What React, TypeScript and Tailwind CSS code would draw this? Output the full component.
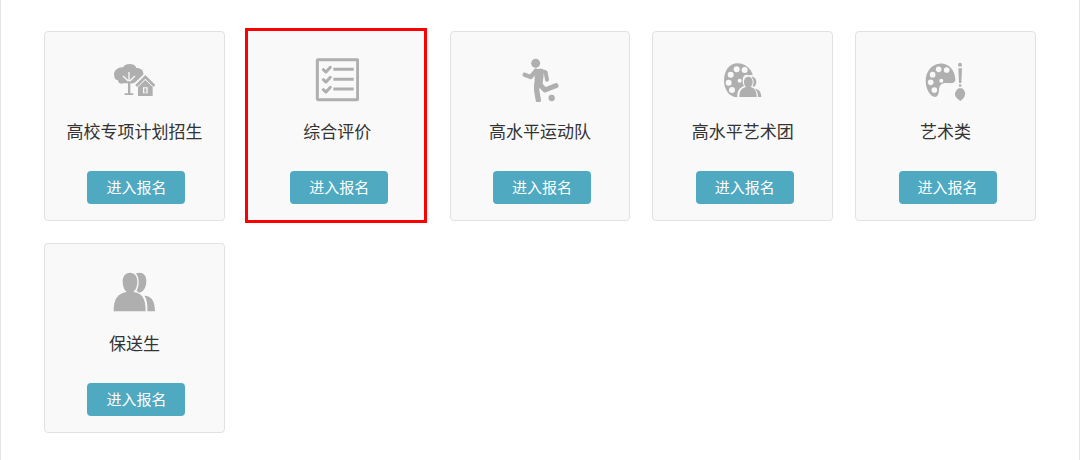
import React from 'react';
import { clsx } from 'clsx';

interface IconProps {
  viewBox: string;
  children: React.ReactNode;
}

const Icon: React.FC<IconProps> = ({ viewBox, children }) => (
  <svg viewBox={viewBox} className="h-11 w-11 text-[#afafaf]" fill="currentColor" aria-hidden="true">
    {children}
  </svg>
);

const TreeHouseIcon = () => (
  <Icon viewBox="25 24 132 132">
    <path d="M42 56 C47 51 53 53 58 52 C62 44 69 42 78 42 C89 42 96 46 98 54 C109 53 119 60 119 70 L119 74 L98 94 C93 99 87 102 81 100 L58 100 C50 103 43 99 43 91 C35 89 31 84 32 77 C29 70 33 60 42 56 Z" />
    <g fill="none" stroke="#f9f9f9" strokeWidth="4">
      <path d="M76 66 V102 M58 78 L76 95 M94 78 L76 95" />
    </g>
    <path d="M73 94 H80 V130 H89 V135 H63 V130 H73 Z" />
    <path d="M125 74 L157 107 L149 113 V141 H99 V113 L91 107 Z" fill="#f9f9f9" />
    <path d="M125 75 L155 105 L150 111 L125 86 L100 111 L95 105 Z" />
    <path
      fillRule="evenodd"
      d="M125 90 L147 111 V138 H103 V111 Z M118 112 V130 H132 V112 Z"
    />
    <path d="M122 115 H128 V128 H122 Z" />
  </Icon>
);

const ChecklistIcon = () => (
  <Icon viewBox="27 24 132 132">
    <g fill="none" stroke="currentColor">
      <rect x="34" y="29" width="121" height="120" rx="2" strokeWidth="9" />
      <path d="M82 58 H143 M82 88 H143 M82 117 H143" strokeWidth="9" />
      <path
        d="M52 59 L60 66 L73 52 M52 89 L60 96 L73 82 M52 119 L60 126 L73 112"
        strokeWidth="9"
        strokeLinecap="round"
        strokeLinejoin="round"
      />
    </g>
  </Icon>
);

const FootballIcon = () => (
  <Icon viewBox="24 24 132 132">
    <circle cx="77" cy="40" r="13.5" />
    <circle cx="125" cy="144" r="9.5" />
    <path d="M73 57 H98 L101 76 L97 106 L86 116 L73 110 L74 80 Z" />
    <g fill="none" stroke="currentColor" strokeLinecap="round" strokeLinejoin="round">
      <path d="M44 74 L62 81 L78 62" strokeWidth="13" />
      <path d="M92 62 L107 67 L111 89" strokeWidth="12" />
      <path d="M80 105 L80 121 L85 150" strokeWidth="16" />
      <path d="M88 102 L105 120 L138 107" strokeWidth="15" />
    </g>
  </Icon>
);

const ArtTroupeIcon = () => (
  <Icon viewBox="27 24 132 132">
    <path d="M76 40 C103 40 124 61 124 88 C124 110 106 142 76 142 C51 142 36 118 36 91 C36 62 53 40 76 40 Z" />
    <g fill="#f9f9f9">
      <circle cx="74" cy="58" r="9" />
      <circle cx="98" cy="60" r="9" />
      <circle cx="56" cy="74" r="9" />
      <circle cx="50" cy="98" r="9" />
      <circle cx="60" cy="120" r="9" />
      <circle cx="83" cy="92" r="6" />
      <path d="M93 84 C95 74 104 72 112 76 C128 72 136 82 135 98 C134 106 131 110 129 112 C145 115 151 125 151 144 H76 C75 126 80 114 96 108 C92 102 91 93 93 84 Z" />
    </g>
    <path d="M118 80 C127 79 133 86 133 96 C133 103 130 108 126 111 L122 107 C127 99 126 88 118 80 Z" />
    <path d="M129 116 C141 118 148 126 148 141 H138 C138 130 135 122 129 116 Z" />
    <path d="M109 80 C117 80 122 87 122 96 C122 103 119 108 116 111 C129 114 134 123 134 141 H82 C82 124 88 114 102 111 C98 108 96 103 96 96 C96 87 101 80 109 80 Z" />
  </Icon>
);

const PaletteIcon = () => (
  <Icon viewBox="30 24 132 132">
    <path d="M76 41 C102 38 123 59 124 88 C125 101 112 100 98 99 C83 98 76 106 75 119 C74 133 71 140 63 141 C48 140 35 116 35 93 C35 65 52 43 76 41 Z" />
    <g fill="#f9f9f9">
      <circle cx="74" cy="58" r="8.5" />
      <circle cx="98" cy="60" r="8.5" />
      <circle cx="56" cy="74" r="8.5" />
      <circle cx="50" cy="97" r="8.5" />
      <circle cx="61" cy="120" r="8.5" />
      <circle cx="82" cy="92" r="6" />
    </g>
    <circle cx="138" cy="44" r="6" />
    <path d="M133 55 H144 L142 99 H135 Z" />
    <path d="M135 103 H142 V110 H135 Z" />
    <path d="M134 115 H144 C151 120 155 127 153 135 C151 144 145 147 139 153 C133 147 125 144 123 135 C122 127 127 120 134 115 Z" />
  </Icon>
);

const PeopleIcon = () => (
  <Icon viewBox="25 30 132 132">
    <path d="M97 40 C117 34 129 45 128 65 C127 83 119 96 107 98 L99 93 C107 77 108 55 97 40 Z" />
    <path d="M122 107 C145 108 154 125 154 154 H131 C132 134 130 117 122 107 Z" />
    <path d="M79 38 C93 38 101 49 101 65 C101 79 96 90 89 96 C116 99 126 116 126 154 H30 C30 118 41 100 69 96 C62 90 57 79 57 65 C57 49 65 38 79 38 Z" />
  </Icon>
);

interface Category {
  name: string;
  icon: React.ReactNode;
  highlighted?: boolean;
}

const categories: Category[] = [
  { name: '高校专项计划招生', icon: <TreeHouseIcon /> },
  { name: '综合评价', icon: <ChecklistIcon />, highlighted: true },
  { name: '高水平运动队', icon: <FootballIcon /> },
  { name: '高水平艺术团', icon: <ArtTroupeIcon /> },
  { name: '艺术类', icon: <PaletteIcon /> },
  { name: '保送生', icon: <PeopleIcon /> },
];

const CategoryCard: React.FC<{ category: Category }> = ({ category }) => (
  <li
    className={clsx(
      'relative flex flex-col items-center rounded border bg-[#f9f9f9] pt-[26px] pb-4',
      category.highlighted ? 'border-transparent' : 'border-[#e1e1e1]',
    )}
  >
    {category.icon}
    <h3 className="mt-[17px] text-[17px] leading-6 text-[#333]">{category.name}</h3>
    <button
      type="button"
      className="mt-7 ml-1 h-[33px] cursor-pointer rounded bg-[#4ea9c1] px-[19px] pb-0.5 text-[15px] leading-6 text-white hover:bg-[#3f98b0]"
    >
      进入报名
    </button>
    {category.highlighted && (
      <span className="pointer-events-none absolute -top-1 right-0 -bottom-[3px] -left-[3px] border-3 border-[#ff0000]" />
    )}
  </li>
);

export default function App() {
  return (
    <main className="min-h-screen border-x border-[#e4e4e4] bg-white px-[43px] pt-[31px] pb-7 font-['Noto_Sans_CJK_SC',sans-serif]">
      <ul className="grid grid-cols-5 gap-[22px]">
        {categories.map((category) => (
          <CategoryCard key={category.name} category={category} />
        ))}
      </ul>
    </main>
  );
}
